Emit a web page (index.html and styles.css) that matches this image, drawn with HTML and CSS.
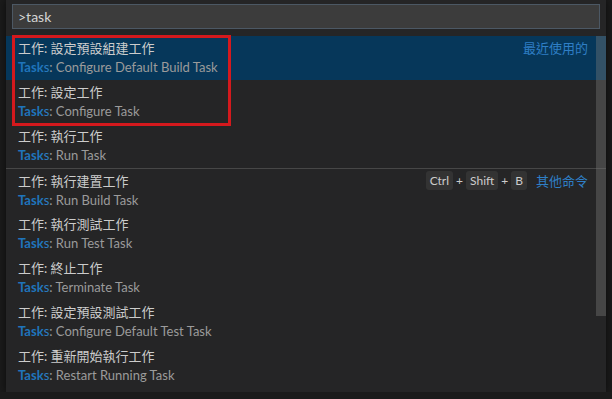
FILE: index.html
```html
<!DOCTYPE html>
<html lang="zh-TW">
<head>
    <meta charset="UTF-8">
    <meta name="viewport" content="width=device-width, initial-scale=1.0">
    <title>命令選擇區</title>
    <link rel="stylesheet" href="styles.css">
</head>
<body>
<div class="quick-input">
    <div class="input-box">&gt;task</div>

    <div class="list">
        <div class="item selected">
            <div class="line">
                <span class="label">工作: 設定預設組建工作</span>
                <span class="tag">最近使用的</span>
            </div>
            <div class="detail"><b>Task</b><span class="hl">s</span>: Configure Default Build Task</div>
        </div>
        <div class="item">
            <div class="line"><span class="label">工作: 設定工作</span></div>
            <div class="detail"><b>Task</b><span class="hl">s</span>: Configure Task</div>
        </div>
        <div class="item">
            <div class="line"><span class="label">工作: 執行工作</span></div>
            <div class="detail"><b>Task</b><span class="hl">s</span>: Run Task</div>
        </div>
        <div class="item sep">
            <div class="line">
                <span class="label">工作: 執行建置工作</span>
                <span class="keys">
                    <kbd>Ctrl</kbd><i>+</i><kbd>Shift</kbd><i>+</i><kbd>B</kbd>
                </span>
                <span class="tag">其他命令</span>
            </div>
            <div class="detail"><b>Task</b><span class="hl">s</span>: Run Build Task</div>
        </div>
        <div class="item">
            <div class="line"><span class="label">工作: 執行測試工作</span></div>
            <div class="detail"><b>Task</b><span class="hl">s</span>: Run Test Task</div>
        </div>
        <div class="item">
            <div class="line"><span class="label">工作: 終止工作</span></div>
            <div class="detail"><b>Task</b><span class="hl">s</span>: Terminate Task</div>
        </div>
        <div class="item">
            <div class="line"><span class="label">工作: 設定預設測試工作</span></div>
            <div class="detail"><b>Task</b><span class="hl">s</span>: Configure Default Test Task</div>
        </div>
        <div class="item">
            <div class="line"><span class="label">工作: 重新開始執行工作</span></div>
            <div class="detail"><b>Task</b><span class="hl">s</span>: Restart Running Task</div>
        </div>

        <!-- 捲軸 -->
        <div class="scrollbar"></div>
        <!-- 紅框標示 -->
        <div class="mark"></div>
    </div>
</div>
</body>
</html>
```

FILE: styles.css
```css
body {
    margin: 0;
    background: #1b1b1b;
    font-family: Lato, "Noto Sans CJK TC", sans-serif;
    font-size: 13px;
    color: #cccccc;
}
.quick-input {
    margin-left: 6px;
    width: 600px;
    height: 392px;
    background: #252526;
    box-shadow: 0 0 8px rgba(0,0,0,0.6);
    overflow: hidden;
}
.input-box {
    margin: 4px 6px 0 6px;
    height: 23px;
    line-height: 23px;
    padding-left: 5px;
    background: #3c3c3c;
    border: 1px solid #4c5864;
    font-size: 14px;
    color: #d4d4d4;
}
.list {
    position: relative;
    margin-top: 7px;
}
.item {
    height: 40px;
    padding: 1px 18px 3px 12px;
}
.item.selected {
    background: #06375a;
}
.item.sep {
    border-top: 1px solid #474747;
    height: 39px;
}
.line {
    display: flex;
    align-items: center;
    height: 20px;
}
.label {
    flex: 1;
}
.tag {
    color: #2f7fc6;
}
.detail {
    height: 20px;
    line-height: 20px;
    color: #9b9b9b;
}
.detail b {
    color: #1f74bb;
}
.detail .hl {
    color: #2c7fc4;
}
.keys {
    display: flex;
    align-items: center;
    margin-right: 9px;
}
.keys kbd {
    font-family: Lato, sans-serif;
    font-size: 12px;
    line-height: 19px;
    padding: 0 4px;
    background: #333333;
    border-radius: 3px;
    color: #cccccc;
}
.keys i {
    font-style: normal;
    padding: 0 3px;
    font-size: 12px;
}
.scrollbar {
    position: absolute;
    top: 0;
    right: 0;
    width: 10px;
    height: 280px;
    background: rgba(121,121,121,0.4);
}
.mark {
    position: absolute;
    left: 6px;
    top: -1px;
    width: 213px;
    height: 85px;
    border: 3px solid #d4191d;
}
```
